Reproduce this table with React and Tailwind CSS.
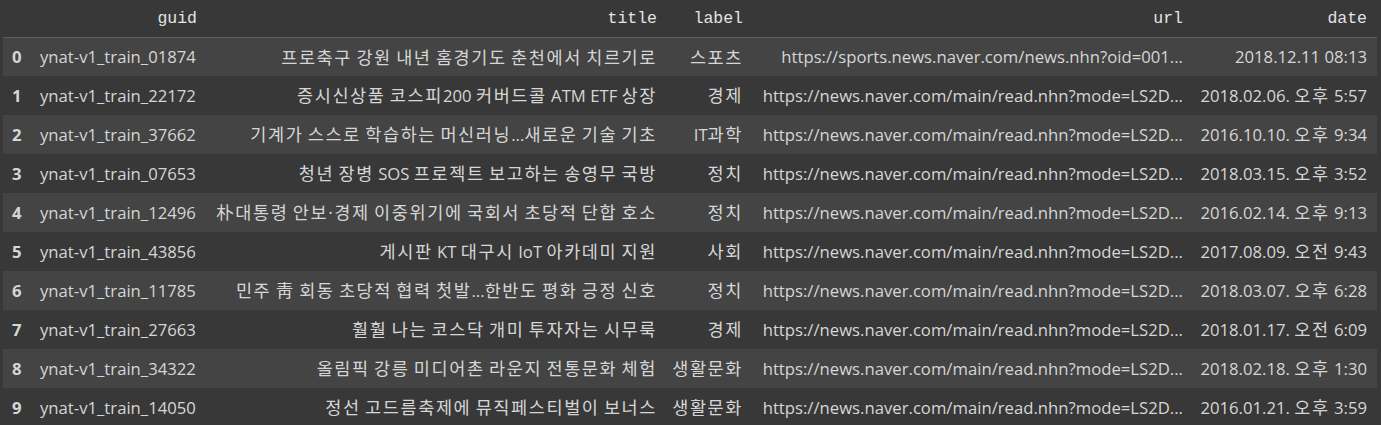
import React from "react";

const rows = [
  ["ynat-v1_train_01874", "프로축구 강원 내년 홈경기도 춘천에서 치르기로", "스포츠", "https://sports.news.naver.com/news.nhn?oid=001...", "2018.12.11 08:13"],
  ["ynat-v1_train_22172", "증시신상품 코스피200 커버드콜 ATM ETF 상장", "경제", "https://news.naver.com/main/read.nhn?mode=LS2D...", "2018.02.06. 오후 5:57"],
  ["ynat-v1_train_37662", "기계가 스스로 학습하는 머신러닝...새로운 기술 기초", "IT과학", "https://news.naver.com/main/read.nhn?mode=LS2D...", "2016.10.10. 오후 9:34"],
  ["ynat-v1_train_07653", "청년 장병 SOS 프로젝트 보고하는 송영무 국방", "정치", "https://news.naver.com/main/read.nhn?mode=LS2D...", "2018.03.15. 오후 3:52"],
  ["ynat-v1_train_12496", "朴대통령 안보·경제 이중위기에 국회서 초당적 단합 호소", "정치", "https://news.naver.com/main/read.nhn?mode=LS2D...", "2016.02.14. 오후 9:13"],
  ["ynat-v1_train_43856", "게시판 KT 대구시 IoT 아카데미 지원", "사회", "https://news.naver.com/main/read.nhn?mode=LS2D...", "2017.08.09. 오전 9:43"],
  ["ynat-v1_train_11785", "민주 靑 회동 초당적 협력 첫발...한반도 평화 긍정 신호", "정치", "https://news.naver.com/main/read.nhn?mode=LS2D...", "2018.03.07. 오후 6:28"],
  ["ynat-v1_train_27663", "훨훨 나는 코스닥 개미 투자자는 시무룩", "경제", "https://news.naver.com/main/read.nhn?mode=LS2D...", "2018.01.17. 오전 6:09"],
  ["ynat-v1_train_34322", "올림픽 강릉 미디어촌 라운지 전통문화 체험", "생활문화", "https://news.naver.com/main/read.nhn?mode=LS2D...", "2018.02.18. 오후 1:30"],
  ["ynat-v1_train_14050", "정선 고드름축제에 뮤직페스티벌이 보너스", "생활문화", "https://news.naver.com/main/read.nhn?mode=LS2D...", "2016.01.21. 오후 3:59"],
];

const headers = ["guid", "title", "label", "url", "date"];
const widths = ["w-[177px]", "w-[460px]", "w-[86px]", "w-[440px]", "w-[184px]"];

// hangul / hanja runs get a wider setting, closer to the original korean font
const cjk = /([\u3131-\u318E\uAC00-\uD7A3\u4E00-\u9FFF\u00B7]+)/;

function Mixed({ text }) {
  return text.split(cjk).map((part, i) =>
    i % 2 === 1 ? (
      <span key={i} className="text-[17.5px] tracking-[1.6px]">
        {part}
      </span>
    ) : (
      part
    )
  );
}

export default function App() {
  return (
    <div className="min-h-screen bg-[#383838] pl-[3px] pr-[4px] overflow-hidden">
      <table className="table-fixed border-collapse w-[1374px] text-[#d6d6d6] font-['Open_Sans','Noto_Sans_CJK_KR',sans-serif] text-[16.7px]">
        <thead>
          <tr className="h-[37px] border-b border-[#5c5c5c]">
            <th className="w-[27px]"></th>
            {headers.map((h, i) => (
              <th
                key={h}
                className={`${widths[i]} text-right pr-[10px] pt-[3px] font-normal font-['Liberation_Mono',monospace] text-[16.5px] text-[#e4e4e4]`}
              >
                {h}
              </th>
            ))}
          </tr>
        </thead>
        <tbody>
          {rows.map((r, i) => (
            <tr key={i} className={`h-[39px] ${i % 2 === 0 ? "bg-[#444444]" : "bg-[#383838]"}`}>
              <td className="pl-[9px] font-bold text-left">{i}</td>
              {r.map((c, j) => (
                <td key={j} className={`pr-[10px] whitespace-nowrap ${j === 0 ? "text-left pl-[10px]" : "text-right"}`}>
                  <Mixed text={c} />
                </td>
              ))}
            </tr>
          ))}
        </tbody>
      </table>
    </div>
  );
}
